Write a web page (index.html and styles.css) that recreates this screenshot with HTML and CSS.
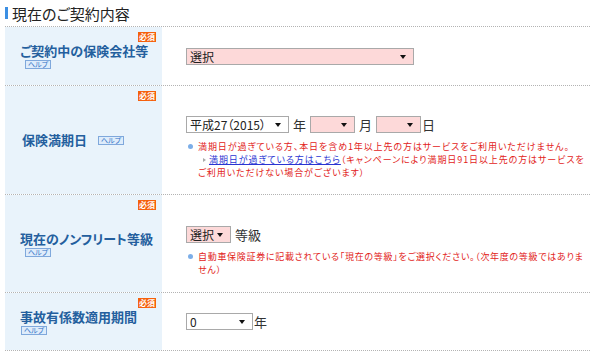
FILE: index.html
```html
<!DOCTYPE html>
<html lang="ja">
<head>
<meta charset="utf-8">
<title>現在のご契約内容</title>
<link rel="stylesheet" href="styles.css">
</head>
<body>
<div class="section">
  <h2 class="title">現在のご契約内容</h2>

  <div class="row r1">
    <div class="head">
      <span class="badge">必須</span>
      <div class="label">ご契約中の保険会社等</div>
      <span class="help">ヘルプ</span>
    </div>
    <div class="body">
      <div class="line">
        <span class="sel pink w-wide">選択</span>
      </div>
    </div>
  </div>

  <div class="row r2">
    <div class="head inline">
      <span class="badge">必須</span>
      <div class="label">保険満期日</div>
      <span class="help help-inline">ヘルプ</span>
    </div>
    <div class="body pad">
      <div class="line">
        <span class="sel w-year">平成27（2015）</span>
        <span class="unit">年</span>
        <span class="sel pink w-small"></span>
        <span class="unit">月</span>
        <span class="sel pink w-small"></span>
        <span class="unit-end">日</span>
      </div>
      <div class="note">
        <span class="dot"></span>
        <div class="note-text">満期日が過ぎている方、本日を含め1年以上先の方はサービスをご利用いただけません。<br><span class="sub"><span class="tri"></span><a class="link" href="#">満期日が過ぎている方はこちら</a></span>（キャンペーンにより満期日91日以上先の方はサービスを<br>ご利用いただけない場合がございます）</div>
      </div>
    </div>
  </div>

  <div class="row r3">
    <div class="head">
      <span class="badge">必須</span>
      <div class="label">現在のノンフリート等級</div>
      <span class="help">ヘルプ</span>
    </div>
    <div class="body pad">
      <div class="line">
        <span class="sel pink w-small">選択</span>
        <span class="unit">等級</span>
      </div>
      <div class="note">
        <span class="dot"></span>
        <div class="note-text narrow">自動車保険証券に記載されている「現在の等級」をご選択ください。（次年度の等級ではありま<br>せん）</div>
      </div>
    </div>
  </div>

  <div class="row r4">
    <div class="head">
      <span class="badge">必須</span>
      <div class="label">事故有係数適用期間</div>
      <span class="help help-tight">ヘルプ</span>
    </div>
    <div class="body">
      <div class="line">
        <span class="sel w-mid">0</span>
        <span class="unit-end">年</span>
      </div>
    </div>
  </div>
</div>
</body>
</html>
```

FILE: styles.css
```css
body {
  margin: 0;
  background: #fff;
  color: #333;
  font-family: "Noto Sans CJK JP", "Noto Sans", sans-serif;
}

.section {
  margin-left: 5px;
  width: 585px;
}

.title {
  margin: 0;
  height: 26px;
  border-bottom: 1px dotted #b3b3b3;
  display: flex;
  align-items: center;
  font-size: 15px;
  font-weight: normal;
  color: #222;
  font-feature-settings: "palt";
}

.title::before {
  content: "";
  width: 3px;
  height: 12px;
  margin-right: 4px;
  background: #3c8fe3;
}

.row {
  display: flex;
  border-bottom: 1px dotted #b3b3b3;
}

.r1 { height: 58px; }
.r2 { height: 108px; }
.r3 { height: 97px; }
.r4 { height: 57px; }

.head {
  width: 157px;
  flex: none;
  box-sizing: border-box;
  padding-left: 15px;
  background: #e9f3fb;
  position: relative;
  display: flex;
  flex-direction: column;
  justify-content: center;
}

.head.inline {
  flex-direction: row;
  align-items: center;
  justify-content: flex-start;
  padding-left: 17px;
}

.label {
  font-size: 13px;
  line-height: 16px;
  font-weight: bold;
  color: #245f9e;
  font-feature-settings: "palt";
  white-space: nowrap;
}

.help {
  align-self: flex-start;
  margin: 1px 0 0 5px;
  height: 9px;
  box-sizing: border-box;
  padding: 0 2px;
  border: 1px solid #7fa8dc;
  background: #deecfb;
  color: #2d6fc4;
  font-size: 7px;
  line-height: 7px;
  font-feature-settings: "palt";
  white-space: nowrap;
}

.help-inline {
  align-self: center;
  margin: 0 0 0 11px;
}

.help-tight {
  margin-left: 1px;
}

.badge {
  position: absolute;
  top: 5px;
  right: 6px;
  padding: 0 1px;
  background: #f5600c;
  color: #fff;
  font-size: 8px;
  line-height: 10px;
  font-weight: bold;
}

.body {
  flex: 1;
  box-sizing: border-box;
  padding-left: 24px;
  display: flex;
  flex-direction: column;
  justify-content: center;
}

.body.pad {
  padding-top: 13px;
}

.line {
  display: flex;
  align-items: center;
  font-size: 13px;
  color: #333;
}

.sel {
  position: relative;
  display: block;
  flex: none;
  height: 17px;
  box-sizing: border-box;
  border: 1px solid #a9a9a9;
  background: #fff;
  padding-left: 3px;
  font-size: 12px;
  line-height: 15px;
  color: #222;
  font-feature-settings: "palt";
  white-space: nowrap;
}

.sel::after {
  content: "";
  position: absolute;
  right: 7px;
  top: 6px;
  border-left: 3px solid transparent;
  border-right: 3px solid transparent;
  border-top: 4px solid #111;
}

.pink { background: #fdd9d9; }

.w-wide { width: 228px; }
.w-year { width: 103px; }
.w-small { width: 45px; }
.w-mid { width: 67px; }

.unit {
  margin: 0 4px;
}

.unit-end {
  margin-left: 1px;
}

.note {
  display: flex;
  margin-top: 6px;
  font-size: 9px;
  letter-spacing: 0.9px;
  line-height: 13px;
  color: #e2231a;
  font-feature-settings: "palt";
}

.dot {
  flex: none;
  width: 5px;
  height: 5px;
  margin: 4px 5px 0 2px;
  border-radius: 50%;
  background: #7caee8;
}

.note-text {
  width: 395px;
}

.note-text.narrow {
  letter-spacing: 0.7px;
}

.sub {
  margin-left: 5px;
}

.tri {
  display: inline-block;
  margin-right: 3px;
  vertical-align: 1px;
  border-left: 3px solid #aaa;
  border-top: 2.5px solid transparent;
  border-bottom: 2.5px solid transparent;
}

.link {
  color: #2a34d2;
  text-decoration: underline;
}
```
